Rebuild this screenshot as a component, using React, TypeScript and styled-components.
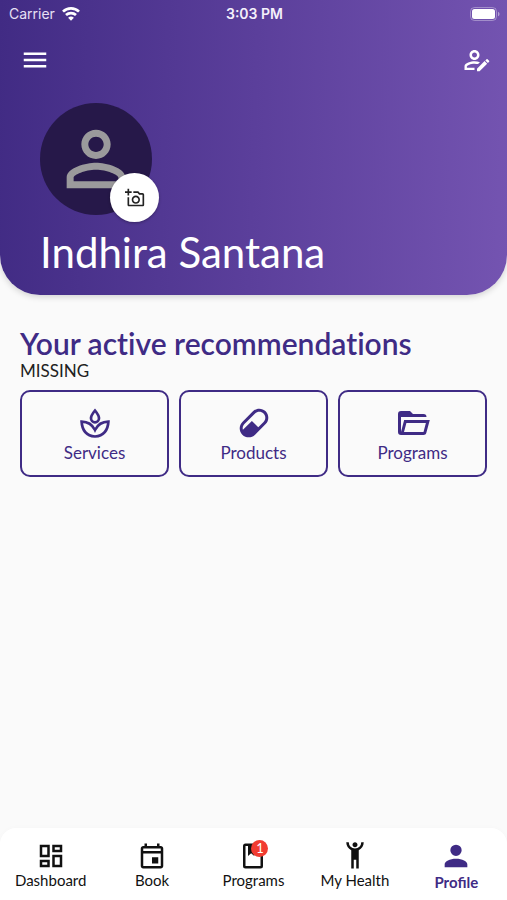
import React from "react";
import styled, { createGlobalStyle } from "styled-components";

const purple = "#3f2b85";

const GlobalStyle = createGlobalStyle`
  * { box-sizing: border-box; }
  body { margin: 0; background: #fafafa; font-family: Lato, "Open Sans", sans-serif; color: #212121; }
  button { font: inherit; color: inherit; background: none; border: 0; padding: 0; cursor: pointer; }
`;

const Screen = styled.div`
  min-height: 100vh;
  display: flex;
  flex-direction: column;
`;

const Hero = styled.header`
  background: linear-gradient(92deg, #412b84 0%, #5b3f9b 50%, #7454b1 100%);
  border-radius: 0 0 40px 40px;
  box-shadow: 0 2px 6px rgba(0, 0, 0, 0.16);
  color: #fff;
  padding-bottom: 19px;
`;

const StatusBar = styled.div`
  display: grid;
  grid-template-columns: 1fr auto 1fr;
  align-items: center;
  height: 28px;
  padding: 0 7px 0 9px;
  font: 400 14px/20px Inter, sans-serif;
`;

const Carrier = styled.span`
  display: flex;
  align-items: center;
  gap: 7px;
  color: #e7e0f4;
`;

const Clock = styled.time`
  font-weight: 600;
  color: #f4f0fb;
`;

const BatterySlot = styled.span`
  display: flex;
  justify-content: flex-end;
`;

const Toolbar = styled.div`
  display: flex;
  justify-content: space-between;
  align-items: center;
  height: 64px;
  padding: 0 15px 0 20px;
`;

const IconButton = styled.button`
  display: flex;
`;

const Identity = styled.div`
  padding: 11px 40px 0;
`;

const Avatar = styled.div`
  position: relative;
  display: flex;
  align-items: center;
  justify-content: center;
  width: 112px;
  height: 112px;
  border-radius: 50%;
  background: #261849;
  color: #9b9a9c;
`;

const PhotoButton = styled.button`
  position: absolute;
  right: -7px;
  bottom: -7px;
  display: flex;
  align-items: center;
  justify-content: center;
  width: 49px;
  height: 49px;
  border-radius: 50%;
  background: #fff;
  color: #222;
  box-shadow: 0 1px 3px rgba(0, 0, 0, 0.3);
`;

const Name = styled.h1`
  margin: 13px 0 0;
  font-size: 42px;
  line-height: 48px;
  font-weight: 400;
`;

const Content = styled.main`
  flex: 1;
  padding: 32px 20px;
`;

const Title = styled.h2`
  margin: 0;
  font-size: 30px;
  line-height: 32px;
  font-weight: 600;
  font-variant-ligatures: none;
  color: ${purple};
`;

const Note = styled.p`
  margin: 0;
  font-size: 17px;
  line-height: 24px;
`;

const Cards = styled.div`
  display: grid;
  grid-template-columns: repeat(3, 1fr);
  gap: 10px;
  margin-top: 7px;
`;

const Card = styled.button`
  && {
    display: flex;
    flex-direction: column;
    align-items: center;
    height: 87px;
    padding-top: 13px;
    border: 2px solid ${purple};
    border-radius: 10px;
    color: ${purple};
    font-size: 17px;
    line-height: 24px;
  }
`;

const TabBar = styled.nav`
  display: grid;
  grid-template-columns: repeat(5, 1fr);
  height: 72px;
  background: #fff;
  border-radius: 16px 16px 0 0;
  box-shadow: 0 0 6px rgba(0, 0, 0, 0.02);
`;

const Tab = styled.a<{ $active?: boolean }>`
  display: flex;
  flex-direction: column;
  align-items: center;
  padding-top: ${(p) => (p.$active ? 11 : 13)}px;
  color: ${(p) => (p.$active ? purple : "#111")};
  font-size: 15px;
  line-height: 18px;
  font-weight: ${(p) => (p.$active ? 700 : 400)};
  text-decoration: none;
`;

const TabIcon = styled.span`
  position: relative;
  display: flex;
`;

const Badge = styled.span`
  position: absolute;
  top: -1px;
  right: 0;
  width: 17px;
  height: 17px;
  border-radius: 50%;
  background: #f13c31;
  color: #fff;
  font-size: 13px;
  line-height: 17px;
  text-align: center;
`;

const paths = {
  menu: "M3 18h18v-2H3v2zm0-5h18v-2H3v2zm0-7v2h18V6H3z",
  editAccount:
    "M2 17v3h8v-1.9H3.9V17c0-.64 3.13-2.1 6.1-2.1.96.01 1.91.14 2.83.38l1.52-1.52C12.95 13.29 11.49 13.03 10 13c-2.67 0-8 1.34-8 4m8-13C7.79 4 6 5.79 6 8s1.79 4 4 4 4-1.79 4-4-1.79-4-4-4m0 6c-1.1 0-2-.9-2-2s.9-2 2-2 2 .9 2 2-.9 2-2 2m11.7 3.35l-1 1-2.05-2.05 1-1c.2-.2.54-.2.77 0l1.28 1.28c.2.2.2.54 0 .77M12 18.94l6.06-6.06 2.05 2.05L14.06 21H12v-2.06z",
  person:
    "M12 5.9c1.16 0 2.1.94 2.1 2.1s-.94 2.1-2.1 2.1S9.9 9.16 9.9 8s.94-2.1 2.1-2.1m0 9c2.97 0 6.1 1.46 6.1 2.1v1.1H5.9V17c0-.64 3.13-2.1 6.1-2.1M12 4C9.79 4 8 5.79 8 8s1.79 4 4 4 4-1.79 4-4-1.79-4-4-4zm0 9c-2.67 0-8 1.34-8 4v3h16v-3c0-2.66-5.33-4-8-4z",
  addPhoto:
    "M21 6h-3.17L16 4h-6v2h5.12l1.83 2H21v12H5v-9H3v9c0 1.1.9 2 2 2h16c1.1 0 2-.9 2-2V8c0-1.1-.9-2-2-2zM8 14c0 2.76 2.24 5 5 5s5-2.24 5-5-2.24-5-5-5-5 2.24-5 5zm5-3c1.65 0 3 1.35 3 3s-1.35 3-3 3-3-1.35-3-3 1.35-3 3-3zM5 6h3V4H5V1H3v3H0v2h3v3h2z",
  pill: "M4.22 11.29L11.29 4.22C13.64 1.88 17.43 1.88 19.78 4.22C22.12 6.56 22.12 10.36 19.78 12.71L12.71 19.78C10.36 22.12 6.56 22.12 4.22 19.78C1.88 17.43 1.88 13.64 4.22 11.29M5.64 12.71C4.59 13.75 4.24 15.24 4.6 16.57L10.59 10.59L14.83 14.83L18.36 11.29C19.93 9.73 19.93 7.2 18.36 5.64C16.8 4.07 14.27 4.07 12.71 5.64L5.64 12.71Z",
  folder:
    "M6.1 10L4 18V8H21A2 2 0 0 0 19 6H12L10 4H4A2 2 0 0 0 2 6V18A2 2 0 0 0 4 20H19C19.9 20 20.7 19.4 20.9 18.5L23.2 10H6.1M19 18H6L7.6 12H20.6L19 18Z",
  dashboard:
    "M19 5v2h-4V5h4M9 5v6H5V5h4m10 8v6h-4v-6h4M9 17v2H5v-2h4M21 3h-8v6h8V3zM11 3H3v10h8V3zm10 8h-8v10h8V11zm-10 4H3v6h8v-6z",
  calendar:
    "M19 4h-1V2h-2v2H8V2H6v2H5c-1.11 0-2 .9-2 2v14c0 1.1.89 2 2 2h14c1.1 0 2-.9 2-2V6c0-1.1-.9-2-2-2zm0 16H5V10h14v10zm0-12H5V6h14v2zm-7 5h5v5h-5z",
  book: "M18 2a2 2 0 0 1 2 2v16a2 2 0 0 1-2 2H6a2 2 0 0 1-2-2V4a2 2 0 0 1 2-2h12m0 2h-5v8l-2.5-2.25L8 12V4H6v16h12V4z",
  handsUp:
    "M5 1c0 2.7 1.56 5.16 4 6.32V22h2v-7h2v7h2V7.31c2.44-1.16 4-3.61 4-6.31h-2a5 5 0 0 1-5 5 5 5 0 0 1-5-5m5 0c-1.11 0-2 .89-2 2s.89 2 2 2 2-.89 2-2-.89-2-2-2z",
  account:
    "M12 4a4 4 0 0 1 4 4 4 4 0 0 1-4 4 4 4 0 0 1-4-4 4 4 0 0 1 4-4m0 10c4.42 0 8 1.79 8 4v2H4v-2c0-2.21 3.58-4 8-4z",
};

// The raised-arms figure: head centred between the arms.
paths.handsUp =
  "M5 1c0 2.7 1.56 5.16 4 6.32V22h2v-7h2v7h2V7.31c2.44-1.16 4-3.61 4-6.31h-2a5 5 0 0 1-5 5 5 5 0 0 1-5-5H5m7 0c-1.11 0-2 .89-2 2s.89 2 2 2 2-.89 2-2-.89-2-2-2z";

function Icon({ name, size }: { name: keyof typeof paths; size: number }) {
  return (
    <svg width={size} height={size} viewBox="0 0 24 24" fill="currentColor" aria-hidden="true">
      <path d={paths[name]} />
    </svg>
  );
}

function SpaIcon() {
  return (
    <svg width="36" height="36" viewBox="0 0 36 36" fill="none" stroke="currentColor" strokeWidth="2.7" aria-hidden="true">
      <path d="M18 5.5C15.5 8.5 14 11 14 13.3a4 4 0 0 0 8 0C22 11 20.5 8.5 18 5.5Z" />
      <path d="M4.6 16.6c5.9.1 10.9 3.3 13.4 8.4 2.5-5.1 7.5-8.3 13.4-8.4C30.9 25.2 26.5 30.7 18 31.5 9.5 30.7 5.1 25.2 4.6 16.6Z" />
    </svg>
  );
}

function WifiIcon() {
  return (
    <svg width="18" height="14" viewBox="0 0 18 14" fill="none" stroke="#fff" strokeWidth="2.7" aria-hidden="true">
      <path d="M1 4.6a11.5 11.5 0 0 1 16 0" />
      <path d="M4 8.1a7.3 7.3 0 0 1 10 0" />
      <path d="M9 13.7L6.1 10.8a4.2 4.2 0 0 1 5.8 0Z" fill="#fff" stroke="none" />
    </svg>
  );
}

function BatteryIcon() {
  return (
    <svg width="30" height="14" viewBox="0 0 30 14" aria-label="Battery full" role="img">
      <rect x="0.5" y="0.5" width="26" height="13" rx="4" fill="none" stroke="#fff" strokeOpacity="0.35" />
      <rect x="2" y="2" width="23" height="10" rx="2.5" fill="#fff" />
      <path d="M28 4.7c2 .8 2 3.8 0 4.6Z" fill="#fff" fillOpacity="0.45" />
    </svg>
  );
}

export default function App() {
  return (
    <Screen>
      <GlobalStyle />
      <Hero>
        <StatusBar>
          <Carrier>
            Carrier
            <WifiIcon />
          </Carrier>
          <Clock>3:03 PM</Clock>
          <BatterySlot>
            <BatteryIcon />
          </BatterySlot>
        </StatusBar>
        <Toolbar>
          <IconButton aria-label="Open menu">
            <Icon name="menu" size={30} />
          </IconButton>
          <IconButton aria-label="Edit profile">
            <Icon name="editAccount" size={30} />
          </IconButton>
        </Toolbar>
        <Identity>
          <Avatar>
            <Icon name="person" size={88} />
            <PhotoButton aria-label="Add photo">
              <Icon name="addPhoto" size={20} />
            </PhotoButton>
          </Avatar>
          <Name>Indhira Santana</Name>
        </Identity>
      </Hero>
      <Content>
        <Title>Your active recommendations</Title>
        <Note>MISSING</Note>
        <Cards>
          <Card>
            <SpaIcon />
            Services
          </Card>
          <Card>
            <Icon name="pill" size={36} />
            Products
          </Card>
          <Card>
            <Icon name="folder" size={36} />
            Programs
          </Card>
        </Cards>
      </Content>
      <TabBar>
        <Tab href="#dashboard">
          <Icon name="dashboard" size={30} />
          Dashboard
        </Tab>
        <Tab href="#book">
          <Icon name="calendar" size={30} />
          Book
        </Tab>
        <Tab href="#programs">
          <TabIcon>
            <Icon name="book" size={30} />
            <Badge>1</Badge>
          </TabIcon>
          Programs
        </Tab>
        <Tab href="#health">
          <Icon name="handsUp" size={30} />
          My Health
        </Tab>
        <Tab href="#profile" $active aria-current="page">
          <Icon name="account" size={34} />
          Profile
        </Tab>
      </TabBar>
    </Screen>
  );
}
